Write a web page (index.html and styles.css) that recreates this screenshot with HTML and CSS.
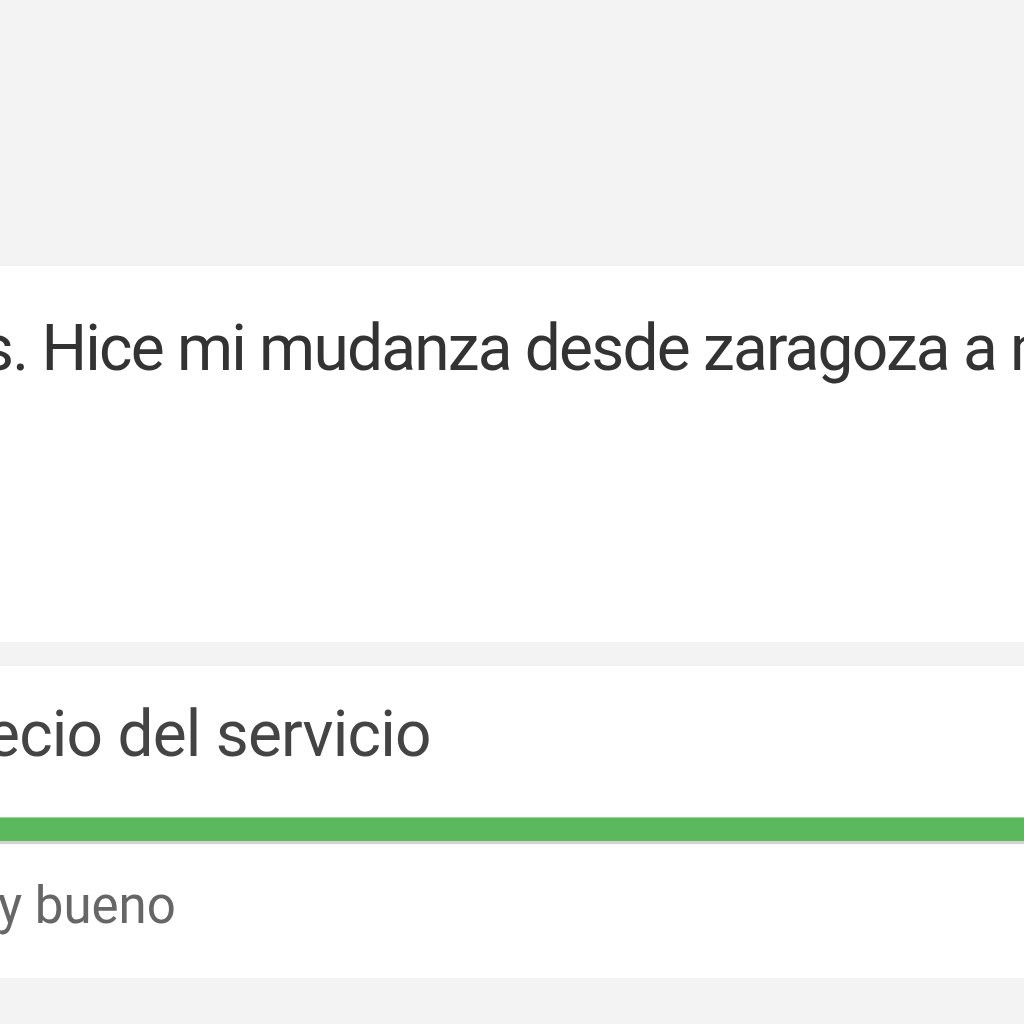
FILE: index.html
```html
<!DOCTYPE html>
<html lang="es">
<head>
    <meta charset="UTF-8">
    <title>Opinión</title>
    <link rel="stylesheet" href="styles.css">
</head>
<body>
    <div class="top"></div>

    <div class="card review">
        <p class="review-text">s. Hice mi mudanza desde zaragoza a m</p>
    </div>

    <div class="card rating">
        <h3 class="rating-title">ecio del servicio</h3>
        <div class="bar"><div class="bar-fill"></div></div>
        <p class="rating-label">y bueno</p>
    </div>
</body>
</html>
```

FILE: styles.css
```css
body {
    margin: 0;
    background-color: #f3f3f3;
    font-family: Roboto, "Open Sans", sans-serif;
    overflow: hidden;
}
.top {
    height: 266px;
}
.card {
    background-color: #fff;
    overflow: hidden;
}
.review {
    height: 376px;
    margin-bottom: 24px;
}
.review-text {
    margin: 51px 0 0 -19px;
    font-size: 64px;
    line-height: 64px;
    letter-spacing: -1.8px;
    color: #333;
    white-space: nowrap;
}
.rating {
    height: 312px;
}
.rating-title {
    margin: 37px 0 0 -14px;
    font-size: 64px;
    line-height: 64px;
    letter-spacing: -0.8px;
    font-weight: normal;
    color: #444;
    white-space: nowrap;
}
.bar {
    margin-top: 50px;
    background-color: #d3d3d3;
    padding-bottom: 3px;
}
.bar-fill {
    height: 23px;
    border-top: 1px solid #9fd19f;
    background-color: #5cb85c;
}
.rating-label {
    margin: 36px 0 0 -2px;
    font-size: 51px;
    line-height: 51px;
    color: #666;
    white-space: nowrap;
}
```
